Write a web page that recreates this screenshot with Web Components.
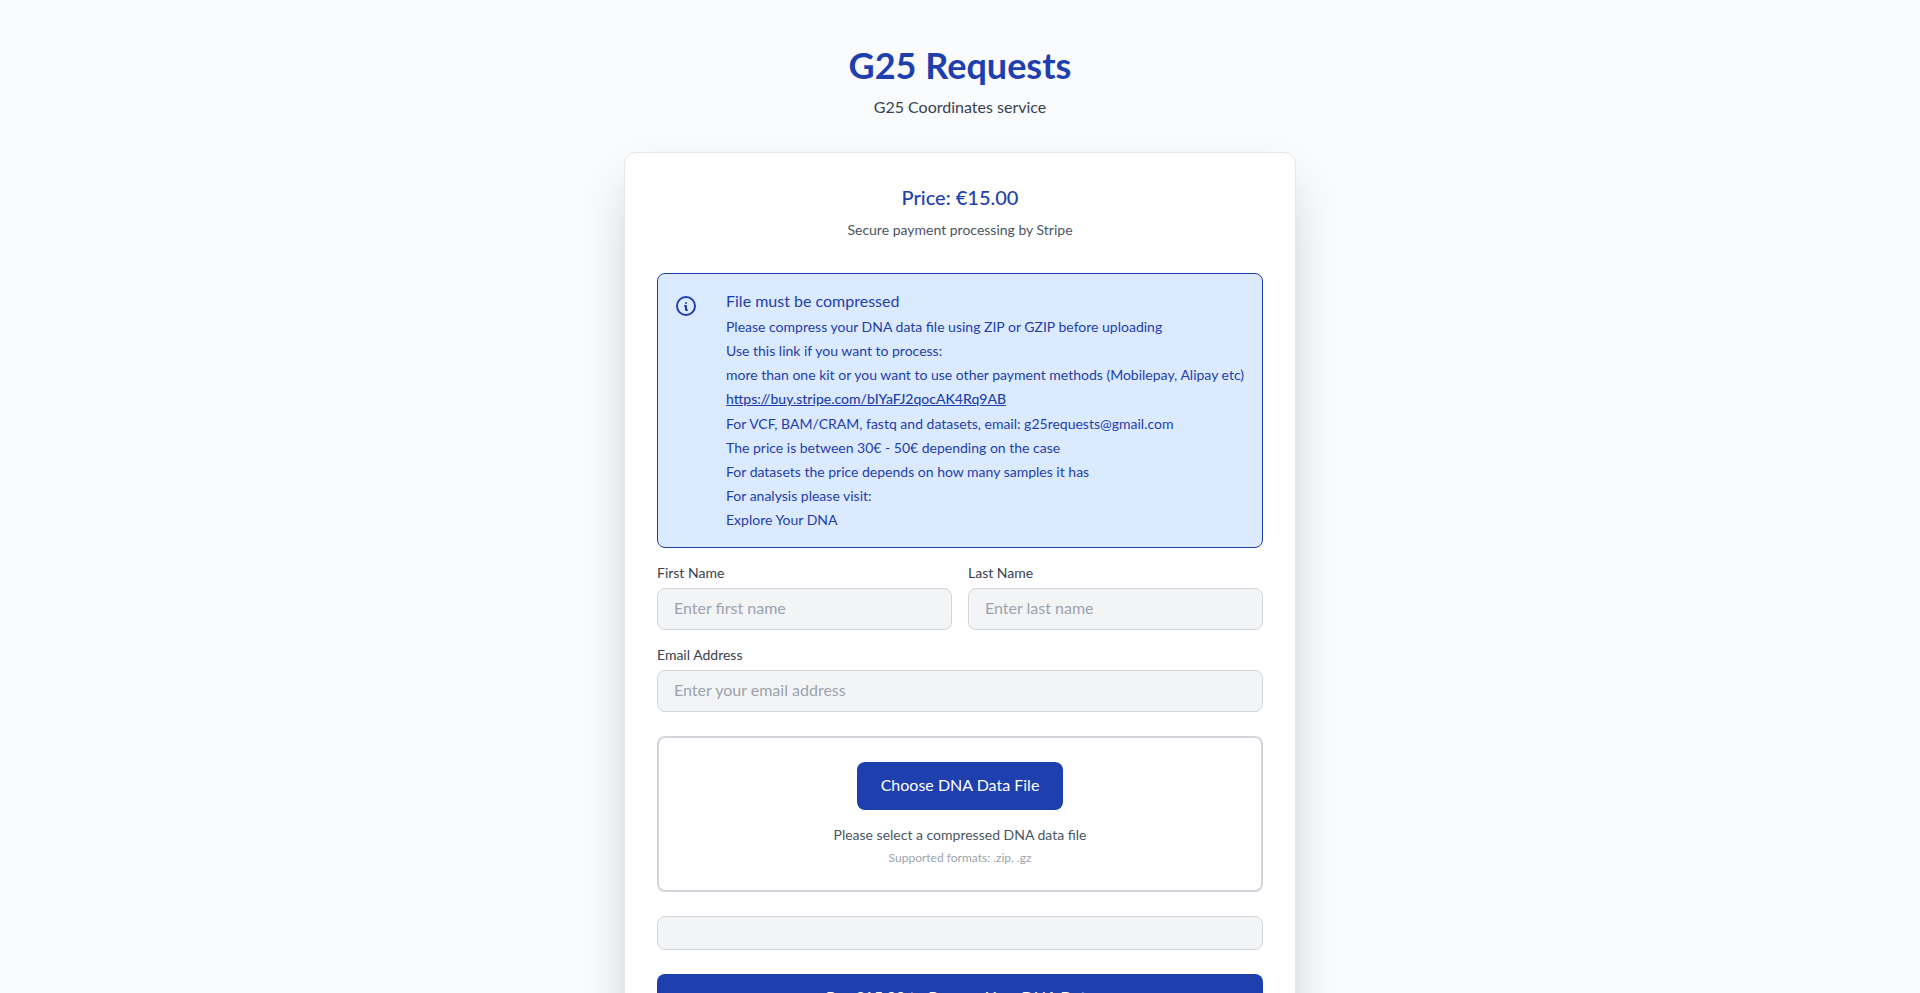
<!DOCTYPE html>
<html lang="en">
<head>
<meta charset="utf-8">
<meta name="viewport" content="width=device-width, initial-scale=1">
<title>G25 Requests</title>
<style>
  :root {
    --brand: #1e40af;
    --brand-soft: #dbeafe;
    --field: #f3f4f6;
    --line: #d1d5db;
    --ink: #374151;
    --ink-soft: #4b5563;
    --ink-faint: #9ca3af;
  }
  body {
    margin: 0;
    min-height: 100vh;
    background: #f9fbfd;
    color: var(--ink);
    font: 16px/24px Lato, "Liberation Sans", sans-serif;
  }
</style>
</head>
<body>
<request-page>
  <page-heading slot="heading" text="G25 Requests">G25 Coordinates service</page-heading>
  <request-card>
    <price-summary price="Price: €15.00">Secure payment processing by Stripe</price-summary>
    <info-notice heading="File must be compressed">
      <notice-line>Please compress your DNA data file using ZIP or GZIP before uploading</notice-line>
      <notice-line>Use this link if you want to process:</notice-line>
      <notice-line>more than one kit or you want to use other payment methods (Mobilepay, Alipay etc)</notice-line>
      <notice-line href="https://buy.stripe.com/bIYaFJ2qocAK4Rq9AB">https://buy.stripe.com/bIYaFJ2qocAK4Rq9AB</notice-line>
      <notice-line>For VCF, BAM/CRAM, fastq and datasets, email: g25requests@gmail.com</notice-line>
      <notice-line>The price is between 30€ - 50€ depending on the case</notice-line>
      <notice-line>For datasets the price depends on how many samples it has</notice-line>
      <notice-line>For analysis please visit:</notice-line>
      <notice-line href="#explore" plain>Explore Your DNA</notice-line>
    </info-notice>
    <field-row>
      <text-field label="First Name" placeholder="Enter first name"></text-field>
      <text-field label="Last Name" placeholder="Enter last name"></text-field>
    </field-row>
    <field-row>
      <text-field label="Email Address" type="email" placeholder="Enter your email address"></text-field>
    </field-row>
    <file-drop button="Choose DNA Data File" hint="Supported formats: .zip, .gz">Please select a compressed DNA data file</file-drop>
    <card-element></card-element>
    <pay-button>Pay €15.00 to Process Your DNA Data</pay-button>
  </request-card>
</request-page>

<script>
  const reset = '*, *::before, *::after { box-sizing: border-box; } h1, h2, h3, p { margin: 0; }';

  function define(name, render, setup) {
    customElements.define(name, class extends HTMLElement {
      constructor() {
        super();
        this.attachShadow({ mode: 'open' });
      }
      connectedCallback() {
        const { css, html } = render(this);
        this.shadowRoot.innerHTML = `<style>${reset}${css}</style>${html}`;
        if (setup) setup(this.shadowRoot);
      }
    });
  }

  define('request-page', () => ({
    css: `
      :host { display: block; padding: 48px 16px; }
      main { max-width: 672px; margin: 0 auto; display: grid; gap: 32px; }`,
    html: '<main><slot name="heading"></slot><slot></slot></main>'
  }));

  define('page-heading', el => ({
    css: `
      :host { display: block; text-align: center; }
      h1 { font-size: 36px; line-height: 34px; font-weight: 700; color: var(--brand); margin-bottom: 14px; }
      p { line-height: 22px; padding-bottom: 2px; }`,
    html: `<h1>${el.getAttribute('text')}</h1><p><slot></slot></p>`
  }));

  define('request-card', () => ({
    css: `
      :host {
        display: block; box-sizing: border-box; padding: 32px; background: #fff;
        border: 1px solid #e5e7eb; border-radius: 12px;
        box-shadow: 0 25px 50px -12px rgba(0, 0, 0, .25);
      }`,
    html: '<slot></slot>'
  }));

  define('price-summary', el => ({
    css: `
      :host { display: block; text-align: center; margin-bottom: 32px; }
      h2 { font-size: 20px; line-height: 24px; font-weight: 500; color: var(--brand); margin-bottom: 12px; }
      p { font-size: 14px; line-height: 18px; padding-bottom: 2px; color: var(--ink-soft); }`,
    html: `<h2>${el.getAttribute('price')}</h2><p><slot></slot></p>`
  }));

  define('info-notice', el => ({
    css: `
      :host {
        display: flex; align-items: flex-start; gap: 28px; padding: 16px 16px 15px;
        color: var(--brand); background: var(--brand-soft);
        border: 1px solid var(--brand); border-radius: 8px;
      }
      svg { flex: none; margin-top: 4px; }
      h3 { font-size: 16px; line-height: 22px; font-weight: 400; margin-bottom: 3px; }`,
    html: `
      <svg width="24" height="24" viewBox="0 0 24 24" fill="none" stroke="currentColor" stroke-width="2" stroke-linecap="round" stroke-linejoin="round" aria-hidden="true">
        <circle cx="12" cy="12" r="9"/><path d="M12 9h.01M11 12h1v4h1"/>
      </svg>
      <div><h3>${el.getAttribute('heading')}</h3><slot></slot></div>`
  }));

  define('notice-line', el => {
    const href = el.getAttribute('href');
    return {
      css: `
        :host { display: block; font-size: 14px; line-height: 24px; }
        :host([href]:not([plain])) { padding-bottom: 1px; font-weight: 500; }
        a { color: inherit; text-decoration: underline; }
        :host([plain]) a { text-decoration: none; }`,
      html: href ? `<a href="${href}"><slot></slot></a>` : '<slot></slot>'
    };
  });

  define('field-row', () => ({
    css: ':host { display: grid; grid-auto-flow: column; grid-auto-columns: 1fr; gap: 16px; margin-top: 16px; }',
    html: '<slot></slot>'
  }));

  define('text-field', el => ({
    css: `
      :host { display: block; }
      label { display: block; font-size: 14px; line-height: 18px; color: var(--ink); margin-bottom: 6px; }
      input {
        display: block; width: 100%; padding: 6px 16px 10px; height: 42px;
        font: inherit; color: var(--ink); background: var(--field);
        border: 1px solid var(--line); border-radius: 8px;
      }
      input::placeholder { color: var(--ink-faint); opacity: 1; }`,
    html: `
      <label for="field">${el.getAttribute('label')}</label>
      <input id="field" type="${el.getAttribute('type') || 'text'}" placeholder="${el.getAttribute('placeholder')}">`
  }));

  const buttonStyle = `
    button {
      padding: 11px 24px 13px; font: inherit; color: #fff;
      background: var(--brand); border: 0; border-radius: 8px; cursor: pointer;
    }`;

  define('file-drop', el => ({
    css: `
      :host {
        display: block; margin-top: 24px; padding: 24px; text-align: center;
        border: 2px solid var(--line); border-radius: 8px;
      }
      ${buttonStyle}
      button { display: block; margin: 0 auto 16px; }
      p { font-size: 14px; line-height: 18px; color: var(--ink-soft); }
      .hint { font-size: 12px; line-height: 16px; color: var(--ink-faint); margin-top: 6px; }`,
    html: `
      <input type="file" accept=".zip,.gz" aria-label="${el.getAttribute('button')}" hidden>
      <button type="button">${el.getAttribute('button')}</button>
      <p><slot></slot></p>
      <p class="hint">${el.getAttribute('hint')}</p>`
  }), root => {
    root.querySelector('button').addEventListener('click', () => root.querySelector('input').click());
  });

  define('card-element', () => ({
    css: `
      :host {
        display: block; margin: 24px 0; padding: 16px; background: var(--field);
        border: 1px solid var(--line); border-radius: 8px;
      }`,
    html: '<slot></slot>'
  }));

  define('pay-button', () => ({
    css: `:host { display: block; } ${buttonStyle} button { display: block; width: 100%; font-weight: 500; }`,
    html: '<button type="submit"><slot></slot></button>'
  }));
</script>
</body>
</html>
